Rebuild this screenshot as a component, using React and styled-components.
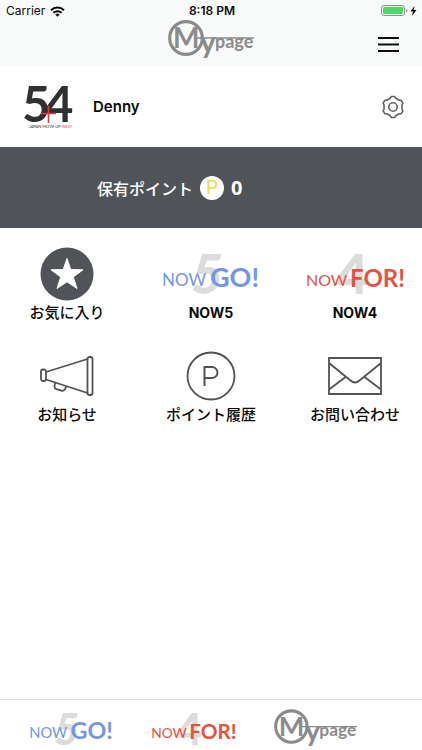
import React from "react";
import styled, { createGlobalStyle } from "styled-components";

const GlobalStyle = createGlobalStyle`
  * { box-sizing: border-box; }
  body {
    margin: 0;
    background: #ffffff;
    color: #0b0b0b;
    font-family: Inter, "Noto Sans CJK JP", sans-serif;
  }
`;

const Page = styled.div`
  display: flex;
  flex-direction: column;
  min-height: 100vh;
`;

const Header = styled.header`
  background: #f9fbfa;
`;

const StatusBar = styled.div`
  display: grid;
  grid-template-columns: 1fr auto 1fr;
  align-items: center;
  height: 20px;
  padding: 2px 4px 0 6px;
  font-size: 12px;
  line-height: 16px;
`;

const StatusGroup = styled.div`
  display: flex;
  align-items: center;
  gap: ${(p) => p.$gap}px;
  justify-content: ${(p) => (p.$end ? "flex-end" : "flex-start")};
`;

const Clock = styled.time`
  font-weight: 600;
`;

const NavBar = styled.div`
  display: grid;
  grid-template-columns: 1fr auto 1fr;
  align-items: start;
  height: 46px;
  padding: 0 18px;
`;

const IconButton = styled.button`
  display: flex;
  justify-self: end;
  padding: 5px;
  border: 0;
  background: none;
  color: inherit;
  cursor: pointer;
`;

const MenuButton = styled(IconButton)`
  margin-top: 10px;
`;

const Profile = styled.section`
  display: flex;
  align-items: center;
  height: 81px;
  padding: 0 13px 0 20px;
`;

const UserName = styled.h1`
  flex: 1;
  margin: 0 0 0 17px;
  font-size: 15px;
  line-height: 20px;
  font-weight: 600;
`;

const PointsBand = styled.section`
  display: flex;
  align-items: center;
  gap: 7px;
  height: 81px;
  padding-left: 97px;
  background: #505458;
  color: #ffffff;
  font-size: 16px;
  font-weight: 500;
`;

const PointBadge = styled.span`
  display: grid;
  place-items: center;
  width: 24px;
  height: 24px;
  border-radius: 50%;
  background: #ffffff;
  color: #f6d64a;
  font-size: 19px;
  line-height: 24px;
  font-weight: 400;
`;

const PointValue = styled.strong`
  font-family: "Noto Sans", sans-serif;
  font-size: 20px;
  line-height: 24px;
  font-weight: 700;
`;

const Menu = styled.nav`
  display: grid;
  grid-template-columns: 1fr 154px 1fr;
  row-gap: 24px;
  flex: 1;
  align-content: start;
  padding-top: 18px;
`;

const MenuLink = styled.a`
  display: flex;
  flex-direction: column;
  align-items: center;
  color: inherit;
  text-decoration: none;
`;

const MenuArt = styled.span`
  display: flex;
  align-items: center;
  justify-content: center;
  height: 56px;
`;

const MenuLabel = styled.span`
  font-size: ${(p) => (p.$latin ? 14 : 15)}px;
  line-height: 22px;
  font-weight: ${(p) => (p.$latin ? 700 : 500)};
  white-space: nowrap;
`;

const TabBar = styled.nav`
  display: grid;
  grid-template-columns: repeat(3, 1fr);
  height: 51px;
  padding: 9px 45px 0 10px;
  border-top: 1px solid #dedede;
`;

const TabLink = styled.a`
  display: flex;
  align-items: flex-start;
  justify-content: center;
`;

const Drawing = styled.svg`
  display: block;
  overflow: visible;
`;

const LogoText = styled.text`
  font-family: Lato, sans-serif;
  font-size: ${(p) => p.$size}px;
  font-weight: ${(p) => p.$weight || 400};
  font-style: ${(p) => (p.$italic ? "italic" : "normal")};
`;

function WifiIcon() {
  return (
    <Drawing width="15" height="11" viewBox="0 0 15 11" fill="none" stroke="#000" strokeWidth="2" aria-hidden="true">
      <path d="M1 4.2a9.4 9.4 0 0 1 13 0M3.4 6.8a5.9 5.9 0 0 1 8.2 0" />
      <path d="M5.3 8.6a3.2 3.2 0 0 1 4.4 0L7.5 10.8z" fill="#000" stroke="none" />
    </Drawing>
  );
}

function BatteryIcon() {
  return (
    <Drawing width="37" height="12" viewBox="0 0 37 12" aria-label="充電中">
      <rect x="0.5" y="0.5" width="23" height="10" rx="2.5" fill="#fff" stroke="#8d928f" />
      <rect x="2" y="2" width="20" height="7" rx="1" fill="#4cd964" />
      <path d="M25 4v3.5q1.5-.5 1.5-1.75T25 4z" fill="#8d928f" />
      <path d="M33.5 1 29.5 6.5h2.5L31 11l4.500-6h-2.700z" fill="#000" />
    </Drawing>
  );
}

function MypageLogo({ width }) {
  return (
    <Drawing width={width} height={Math.round(width * 0.47)} viewBox="0 0 86 40" fill="#8b8b8b" role="img" aria-label="Mypage">
      <circle cx="18" cy="18" r="16.3" fill="none" stroke="#8b8b8b" strokeWidth="3.2" />
      <LogoText x="5" y="28" $size="28" $weight="700">M</LogoText>
      <path d="M27 18H86" stroke="#8b8b8b" strokeWidth="1.4" />
      <LogoText x="32" y="33" $size="30" $weight="700">y</LogoText>
      <LogoText x="47" y="28" $size="18" $weight="700">page</LogoText>
    </Drawing>
  );
}

function NowLogo({ width, digit, word, color }) {
  const five = digit === "5";
  return (
    <Drawing width={width} height={Math.round(width * 0.46)} viewBox="0 0 96 44" role="img" aria-label={`NOW ${word}`}>
      <LogoText x={five ? 28 : 29} y="42" $size={width > 90 ? 56 : 50} $weight="900" $italic={five} fill="#dcdcdc">{digit}</LogoText>
      <LogoText x="-1" y="34" $size={five ? 17 : 16} fill={color}>NOW</LogoText>
      <LogoText x={five ? 47 : 43} y="35" $size={five ? 27 : 24} $weight="700" fill={color}>{word}</LogoText>
    </Drawing>
  );
}

function BrandLogo() {
  return (
    <Drawing width="56" height="50" viewBox="0 0 56 50" role="img" aria-label="54 Japan Move Up West">
      <LogoText x="2" y="40" $size="49" $weight="700" fill="#303030">5</LogoText>
      <LogoText x="25" y="40" $size="49" $weight="700" fill="#303030">4</LogoText>
      <path d="M21 31.5H36M28.5 24V41" stroke="#e3393b" strokeWidth="1.5" />
      <LogoText x="9" y="46" $size="4" $weight="400" fill="#303030">
        JAPAN MOVE UP <tspan fill="#e3553f">WEST</tspan>
      </LogoText>
    </Drawing>
  );
}

function MenuIcon() {
  return (
    <Drawing width="21" height="18" viewBox="0 0 21 18" stroke="#0d0d0d" strokeWidth="2" aria-hidden="true">
      <path d="M0 3h21M0 9.500h21M0 16h21" />
    </Drawing>
  );
}

const gearOutline = [0, 60, 120, 180, 240, 300]
  .flatMap((corner) => [
    [corner - 17, 9.2],
    [corner - 9, 10.6],
    [corner + 9, 10.6],
    [corner + 17, 9.2],
  ])
  .map(([angle, radius]) => {
    const turn = (angle * Math.PI) / 180;
    return `${(11 + radius * Math.sin(turn)).toFixed(2)},${(12 - radius * Math.cos(turn)).toFixed(2)}`;
  })
  .join(" ");

function GearIcon() {
  return (
    <Drawing width="22" height="24" viewBox="0 0 22 24" fill="none" stroke="#606266" strokeWidth="1.6" strokeLinejoin="round" aria-hidden="true">
      <polygon points={gearOutline} />
      <circle cx="11" cy="12" r="4.2" />
    </Drawing>
  );
}

function StarIcon() {
  return (
    <Drawing width="54" height="54" viewBox="0 0 54 54" aria-hidden="true">
      <circle cx="27" cy="27" r="26.5" fill="#505458" />
      <path d="M27 11.5 30.8 22.6 43 22.800 33.300 30 37 41.500 27 34.800 17 41.500 20.700 30 11 22.800 23.200 22.600z" fill="#fff" stroke="#fff" strokeLinejoin="round" />
    </Drawing>
  );
}

function MegaphoneIcon() {
  return (
    <Drawing width="54" height="42" viewBox="0 0 54 42" fill="none" stroke="#515358" strokeWidth="1.8" aria-hidden="true">
      <rect x="1" y="14.5" width="5" height="11.500" rx="2" />
      <rect x="47.5" y="2" width="5" height="38" rx="2" />
      <path d="M6 17 47.5 4M6 24.5 47.5 38M15 27.5l-.5 4q0 2 2 2.700l5 1.500q2.500.6 3.500-1.500l1.500-3.500" />
    </Drawing>
  );
}

function PointIcon() {
  return (
    <Drawing width="50" height="50" viewBox="0 0 50 50" fill="none" stroke="#515358" strokeWidth="1.8" aria-hidden="true">
      <circle cx="25" cy="25" r="23.5" />
      <path d="M18.500 35V16h7.500a5.500 5.500 0 0 1 0 11h-7.500" strokeWidth="2" />
    </Drawing>
  );
}

function MailIcon() {
  return (
    <Drawing width="54" height="38" viewBox="0 0 54 38" fill="none" stroke="#515358" strokeWidth="1.8" aria-hidden="true">
      <path d="M1 1h52v36H1zM1 6l21.500 17.500q4.500 4 9 0L53 6M1 32.500 17.500 20M53 32.500 36.500 20" />
    </Drawing>
  );
}

const BLUE = "#7396e6";
const RED = "#e5533f";

const menuItems = [
  { label: "お気に入り", art: <StarIcon /> },
  { label: "NOW5", latin: true, art: <NowLogo width={96} digit="5" word="GO!" color={BLUE} /> },
  { label: "NOW4", latin: true, art: <NowLogo width={96} digit="4" word="FOR!" color={RED} /> },
  { label: "お知らせ", art: <MegaphoneIcon /> },
  { label: "ポイント履歴", art: <PointIcon /> },
  { label: "お問い合わせ", art: <MailIcon /> },
];

export default function App() {
  return (
    <Page>
      <GlobalStyle />
      <Header>
        <StatusBar>
          <StatusGroup $gap={5}>Carrier <WifiIcon /></StatusGroup>
          <Clock>8:18 PM</Clock>
          <StatusGroup $end><BatteryIcon /></StatusGroup>
        </StatusBar>
        <NavBar>
          <span />
          <MypageLogo width={86} />
          <MenuButton type="button" aria-label="メニュー"><MenuIcon /></MenuButton>
        </NavBar>
      </Header>
      <Profile>
        <BrandLogo />
        <UserName>Denny</UserName>
        <IconButton type="button" aria-label="設定"><GearIcon /></IconButton>
      </Profile>
      <PointsBand>
        <span>保有ポイント</span>
        <PointBadge>P</PointBadge>
        <PointValue>0</PointValue>
      </PointsBand>
      <Menu>
        {menuItems.map((item) => (
          <MenuLink key={item.label} href="#">
            <MenuArt>{item.art}</MenuArt>
            <MenuLabel $latin={item.latin}>{item.label}</MenuLabel>
          </MenuLink>
        ))}
      </Menu>
      <TabBar>
        <TabLink href="#"><NowLogo width={83} digit="5" word="GO!" color={BLUE} /></TabLink>
        <TabLink href="#"><NowLogo width={83} digit="4" word="FOR!" color={RED} /></TabLink>
        <TabLink href="#"><MypageLogo width={83} /></TabLink>
      </TabBar>
    </Page>
  );
}
